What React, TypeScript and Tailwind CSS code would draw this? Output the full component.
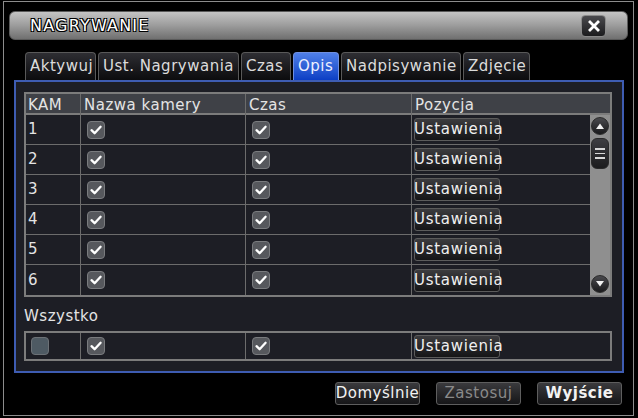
import { type ReactNode } from "react";

const FONT = "font-['DejaVu_Sans',Verdana,sans-serif]";

function Check({ on = true }: { on?: boolean }) {
  return (
    <div
      className={`w-[18px] h-[18px] rounded-[4px] border-[1.5px] flex items-center justify-center ${
        on ? "bg-[#56585d] border-[#797b7e]" : "bg-[#4e5a63] border-[#6c7176]"
      }`}
    >
      {on && (
        <svg width="14" height="14" viewBox="0 0 14 14">
          <path d="M2.5 7.2 L5.6 10.2 L11.6 3.8" fill="none" stroke="#fff" strokeWidth="2.3" strokeLinecap="round" strokeLinejoin="round" />
        </svg>
      )}
    </div>
  );
}

function SetButton() {
  return (
    <div className="w-[86px] h-[23px] rounded-[3px] border border-[#5c5c5c] bg-linear-to-b from-[#3c3c3f] to-[#151517] flex items-center">
      <span className="text-[15px] tracking-[0.7px] text-[#f0f0f0] leading-none -ml-[1px] whitespace-nowrap">Ustawienia</span>
    </div>
  );
}

function Cell({ children, last = false }: { children?: ReactNode; last?: boolean }) {
  return (
    <div className={`flex items-center ${last ? "" : "border-r border-[#6c6c6c]"}`}>{children}</div>
  );
}

function Row({ n, lastRow }: { n: number; lastRow: boolean }) {
  return (
    <div
      className={`grid grid-cols-[55px_165px_166px_1fr] h-[30px] ${
        lastRow ? "" : "border-b border-[#6c6c6c]"
      }`}
    >
      <Cell>
        <span className="pl-[2px] text-[15px] text-[#e4e4e4]">{n}</span>
      </Cell>
      <Cell>
        <div className="pl-[6px]">
          <Check />
        </div>
      </Cell>
      <Cell>
        <div className="pl-[6px]">
          <Check />
        </div>
      </Cell>
      <Cell last>
        <div className="pl-[2px]">
          <SetButton />
        </div>
      </Cell>
    </div>
  );
}

function ScrollBtn({ up }: { up: boolean }) {
  return (
    <div className="w-[18px] h-[18px] rounded-full bg-linear-to-b from-[#4a4a4e] to-[#1a1a1c] border border-[#2a2a2a] flex items-center justify-center">
      <svg width="10" height="8" viewBox="0 0 10 8">
        {up ? <path d="M1 7 L5 1.5 L9 7 Z" fill="#f2f2f2" /> : <path d="M1 1 L5 6.5 L9 1 Z" fill="#f2f2f2" />}
      </svg>
    </div>
  );
}

function Scrollbar() {
  return (
    <div className="w-[20px] bg-[#8f8f8f] flex flex-col items-center py-[2px]">
      <ScrollBtn up />
      <div className="mt-[3px] w-[18px] h-[31px] rounded-[6px] bg-linear-to-b from-[#3e3e42] to-[#1c1c1e] border border-[#2a2a2a] flex flex-col items-center justify-center gap-[3px]">
        <div className="w-[10px] h-[1.5px] bg-[#d8d8d8]" />
        <div className="w-[10px] h-[1.5px] bg-[#d8d8d8]" />
        <div className="w-[10px] h-[1.5px] bg-[#d8d8d8]" />
      </div>
      <div className="flex-1" />
      <ScrollBtn up={false} />
    </div>
  );
}

const tabs = [
  { label: "Aktywuj", w: "w-[71px]" },
  { label: "Ust. Nagrywania", w: "w-[141px]" },
  { label: "Czas", w: "w-[50px]" },
  { label: "Opis", w: "w-[46px]", active: true },
  { label: "Nadpisywanie", w: "w-[120px]" },
  { label: "Zdjęcie", w: "w-[67px]" },
];

function FootButton({ label, disabled, bold }: { label: string; disabled?: boolean; bold?: boolean }) {
  return (
    <div className="w-[85px] h-[23px] rounded-[3px] border border-[#5e5e5e] bg-linear-to-b from-[#3a3a3d] to-[#161618] flex items-center justify-center">
      <span
        className={`text-[15px] tracking-[0.5px] leading-none whitespace-nowrap ${
          disabled ? "text-[#8a8a8a]" : "text-[#f2f2f2]"
        } ${bold ? "font-bold" : ""}`}
      >
        {label}
      </span>
    </div>
  );
}

export default function App() {
  return (
    <div className={`w-[638px] h-[418px] bg-black overflow-hidden pt-[1px] pl-[3px] ${FONT}`}>
      <div className="w-[631px] h-[415px] border border-[#8c8c8c] bg-black flex flex-col">
        {/* Title bar */}
        <div className="mt-[9px] mx-[5px] h-[29px] rounded-[6px] border border-[#5a5a5a] bg-linear-to-b from-[#c4c4c4] via-[#9c9c9c] to-[#707070] flex items-center justify-between">
          <span className="pl-[20px] text-[16px] tracking-[1.2px] text-white [text-shadow:1px_1px_0_#000,-1px_-1px_0_#000,1px_-1px_0_#000,-1px_1px_0_#000]">
            NAGRYWANIE
          </span>
          <div className="mr-[21px] w-[25px] h-[22px] rounded-[4px] border border-[#8a8a8a] bg-linear-to-b from-[#4a4a4e] to-[#1c1c1e] flex items-center justify-center">
            <svg width="12" height="12" viewBox="0 0 12 12">
              <path d="M2 2 L10 10 M10 2 L2 10" stroke="#fff" strokeWidth="2.8" strokeLinecap="square" />
            </svg>
          </div>
        </div>

        {/* Tabs */}
        <div className="mt-[12px] pl-[21px] flex gap-[2px] h-[28px]">
          {tabs.map((t) => (
            <div
              key={t.label}
              className={`${t.w} h-full rounded-t-[4px] border-t border-x flex items-center pl-[4px] ${
                t.active
                  ? "border-[#6f8fe0] bg-linear-to-b from-[#4f7fe8] to-[#0c3ec4] text-[#eef0ff]"
                  : "border-[#595959] bg-linear-to-b from-[#2e2e33] to-[#0c0c0e] text-[#dcdcdc]"
              }`}
            >
              <span className="text-[15px] tracking-[0.5px] whitespace-nowrap leading-none">{t.label}</span>
            </div>
          ))}
        </div>

        {/* Panel */}
        <div className="ml-[10px] mr-[9px] h-[293px] border-2 border-[#3e5cb2] bg-[#1d1e25] pt-[10px] pl-[8px] pr-[10px] flex flex-col">
          <div className="border-2 border-[#7c7c7c] flex flex-col">
            <div className="grid grid-cols-[55px_165px_166px_1fr] h-[21px] bg-[#3f4147] border-b-2 border-[#7c7c7c] text-[15px] tracking-[0.5px] text-[#e4e4e4]">
              <Cell>
                <span className="pl-[2px]">KAM</span>
              </Cell>
              <Cell>
                <span className="pl-[3px]">Nazwa kamery</span>
              </Cell>
              <Cell>
                <span className="pl-[3px]">Czas</span>
              </Cell>
              <Cell last>
                <span className="pl-[3px]">Pozycja</span>
              </Cell>
            </div>
            <div className="flex">
              <div className="flex-1 flex flex-col">
                {[1, 2, 3, 4, 5, 6].map((n) => (
                  <Row key={n} n={n} lastRow={n === 6} />
                ))}
              </div>
              <Scrollbar />
            </div>
          </div>

          <div className="h-[34px] flex items-center pt-[5px]">
            <span className="text-[15px] tracking-[0.5px] text-[#e4e4e4]">Wszystko</span>
          </div>

          <div className="border-2 border-[#7c7c7c] grid grid-cols-[55px_165px_166px_1fr] h-[30px]">
            <Cell>
              <div className="pl-[5px]">
                <Check on={false} />
              </div>
            </Cell>
            <Cell>
              <div className="pl-[6px]">
                <Check />
              </div>
            </Cell>
            <Cell>
              <div className="pl-[6px]">
                <Check />
              </div>
            </Cell>
            <Cell last>
              <div className="pl-[2px]">
                <SetButton />
              </div>
            </Cell>
          </div>
        </div>

        {/* Footer buttons */}
        <div className="mt-[9px] mr-[11px] flex justify-end gap-[16px]">
          <FootButton label="Domyślnie" />
          <FootButton label="Zastosuj" disabled />
          <FootButton label="Wyjście" bold />
        </div>
      </div>
    </div>
  );
}
